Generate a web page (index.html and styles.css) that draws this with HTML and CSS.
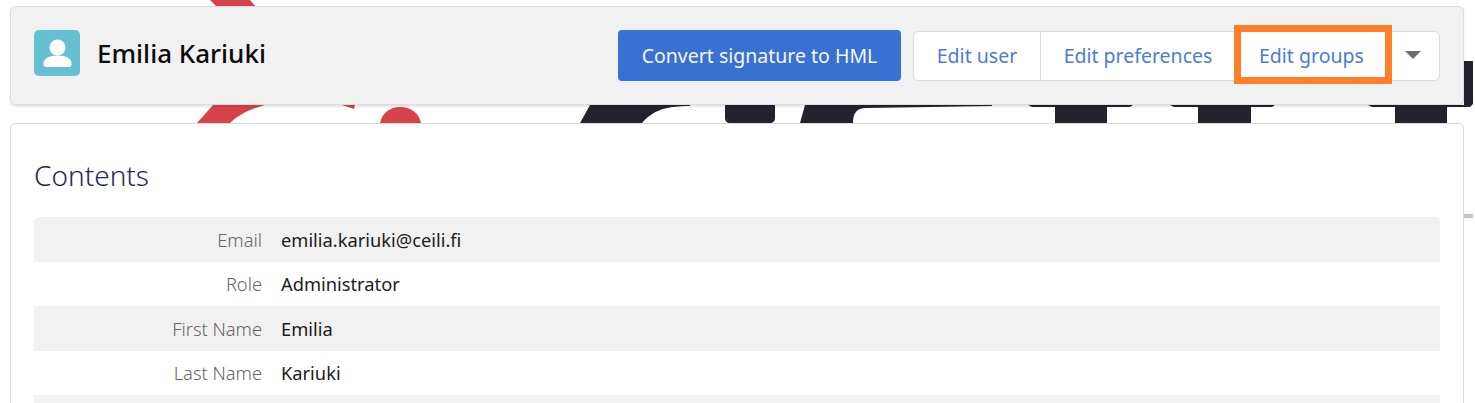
FILE: index.html
```html
<!DOCTYPE html>
<html lang="en">
<head>
    <meta charset="UTF-8">
    <meta name="viewport" content="width=device-width, initial-scale=1.0">
    <title>Emilia Kariuki</title>
    <link rel="stylesheet" href="styles.css">
</head>
<body>
    <!-- Logo behind the cards -->
    <svg class="backdrop" width="1475" height="403" viewBox="0 0 1475 403">
        <path fill="#d8434a" d="M210 0H250L256 7H217Z"/>
        <path fill="#d8434a" d="M197 123L213 105H265C250 109 238 115 230 123Z"/>
        <path fill="#d8434a" d="M342 105H355L354 109Z"/>
        <path fill="#d8434a" d="M380 123C382 113 390 107 400 107C411 107 419 113 421 123Z"/>
        <path fill="#23232f" d="M580 123L590 105H690V106C662 106 652 112 642 123Z"/>
        <path fill="#23232f" d="M725 105H775V118C775 121 773 123 770 123H730C727 123 725 121 725 118Z"/>
        <path fill="#23232f" d="M800 123L805 105H992V106L866 108C857 108 853 113 853 123Z"/>
        <path fill="#23232f" d="M1028 105H1133L1130 107H1107V123H1055V107H1032Z"/>
        <path fill="#23232f" d="M1170 105H1275L1272 107H1251V123H1198V107H1174Z"/>
        <path fill="#23232f" d="M1368 105H1464V107H1447V123H1395V107H1372Z"/>
        <path fill="#23232f" d="M1464 61H1473V104L1470 107H1460V105H1464Z"/>
        <path fill="#c4c4c8" d="M1464 214H1473V218H1464Z"/>
    </svg>

    <main class="page">
        <header class="card head">
            <div class="user">
                <span class="avatar">
                    <svg width="46" height="46" viewBox="0 0 46 46">
                        <circle cx="23.500" cy="17.500" r="8" fill="#fff"/>
                        <path fill="#fff" d="M9.500 33C9.500 28.500 15 25.500 23.500 25.500S37.500 28.500 37.500 33V34.500C37.500 36 36.500 37 35 37H12C10.500 37 9.500 36 9.500 34.500Z"/>
                    </svg>
                </span>
                <h1>Emilia Kariuki</h1>
            </div>
            <div class="actions">
                <button class="btn-primary">Convert signature to HML</button>
                <div class="btn-group">
                    <button class="btn btn-user">Edit user</button>
                    <button class="btn btn-prefs">Edit preferences</button>
                    <button class="btn btn-marked">Edit groups</button>
                    <button class="btn btn-more" aria-label="More"><span class="caret"></span></button>
                </div>
            </div>
        </header>

        <section class="card content">
            <h2>Contents</h2>
            <div class="rows">
                <div class="row"><span class="label">Email</span><span class="value">emilia.kariuki@ceili.fi</span></div>
                <div class="row"><span class="label">Role</span><span class="value">Administrator</span></div>
                <div class="row"><span class="label">First Name</span><span class="value">Emilia</span></div>
                <div class="row"><span class="label">Last Name</span><span class="value">Kariuki</span></div>
                <div class="row"></div>
            </div>
        </section>
    </main>
</body>
</html>
```

FILE: styles.css
```css
html, body {
    height: 100%;
}
body {
    margin: 0;
    overflow: hidden;
    background-color: #fff;
    font-family: "Noto Sans", "Open Sans", sans-serif;
    color: #16161a;
}
.backdrop {
    position: absolute;
    top: 0;
    left: 0;
}
.page {
    position: relative;
    padding: 6px 11px 0 10px;
}
.card {
    border: 1px solid #dcdcdc;
    border-radius: 5px;
}
.head {
    display: flex;
    justify-content: space-between;
    align-items: center;
    height: 97px;
    padding: 0 23px;
    background-color: #f1f1f1;
    box-shadow: 0 2px 2px rgba(0,0,0,0.1);
}
.user {
    display: flex;
    align-items: center;
    gap: 17px;
    margin-top: -5px;
}
.avatar {
    display: flex;
    width: 46px;
    height: 46px;
    border-radius: 5px;
    background-color: #65c0d2;
}
h1 {
    margin: 0;
    font-size: 26px;
    font-weight: 500;
    color: #0b0b0e;
}
.actions {
    display: flex;
    align-items: flex-start;
    gap: 12px;
}
button {
    font-family: inherit;
    font-size: 19.5px;
    cursor: pointer;
}
.btn-primary {
    height: 51px;
    width: 283px;
    padding: 0;
    border: none;
    border-radius: 4px;
    background-color: #3871d2;
    color: #f4f7fc;
}
.btn-group {
    display: flex;
    height: 50px;
    margin-top: 1px;
    box-sizing: border-box;
    border: 1px solid #dcdcdc;
    border-radius: 5px;
    background-color: #fff;
}
.btn {
    position: relative;
    padding: 0 0 2px;
    border: none;
    border-right: 1px solid #dcdcdc;
    background: none;
    color: #4a7cd6;
}
.btn-user {
    width: 127px;
}
.btn-prefs {
    width: 198px;
    padding-right: 3px;
}
.btn-marked {
    width: 151px;
    padding-left: 20px;
    border-right: none;
    text-align: left;
}
/* Orange box drawn around one button */
.btn-marked::after {
    content: "";
    position: absolute;
    top: -7px;
    left: -5px;
    right: -2px;
    bottom: -4px;
    border: 7px solid #ff7f27;
}
.btn-more {
    display: flex;
    align-items: center;
    justify-content: center;
    width: 49px;
    padding-right: 4px;
    border-right: none;
}
.caret {
    border-top: 8px solid #706e6b;
    border-left: 8px solid transparent;
    border-right: 8px solid transparent;
}
.content {
    margin-top: 18px;
    height: 400px;
    padding: 0 23px;
    background-color: #fff;
}
h2 {
    margin: 0;
    padding-top: 33px;
    height: 60px;
    font-size: 28px;
    font-weight: 300;
    line-height: 37px;
    color: #1f2a56;
}
.rows .row:first-child {
    border-radius: 5px 5px 0 0;
}
.row {
    display: flex;
    align-items: center;
    gap: 19px;
    height: 44.5px;
    font-size: 18.3px;
}
.row:nth-child(odd) {
    background-color: #f1f1f1;
}
.label {
    width: 228px;
    text-align: right;
    font-weight: 300;
    color: #666;
}
.value {
    color: #1c1c20;
}
```
